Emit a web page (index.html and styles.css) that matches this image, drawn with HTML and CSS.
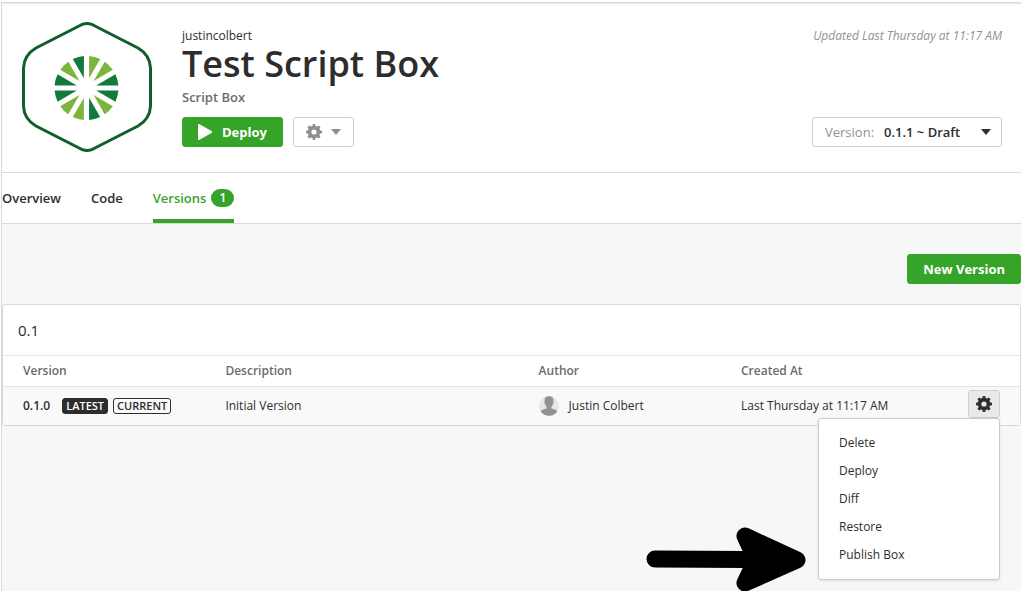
FILE: index.html
```html
<!DOCTYPE html>
<html lang="en">
<head>
<meta charset="utf-8">
<title>Test Script Box</title>
<link rel="stylesheet" href="styles.css">
</head>
<body>
<svg class="defs" aria-hidden="true">
  <symbol id="gear" viewBox="0 0 16 16">
    <circle cx="8" cy="8" r="4.4" fill="none" stroke="currentColor" stroke-width="3.6"/>
    <g fill="currentColor">
      <path id="tooth" d="M6.2 3 6.8 0H9.2L9.8 3Z"/>
      <use href="#tooth" transform="rotate(45 8 8)"/>
      <use href="#tooth" transform="rotate(90 8 8)"/>
      <use href="#tooth" transform="rotate(135 8 8)"/>
      <use href="#tooth" transform="rotate(180 8 8)"/>
      <use href="#tooth" transform="rotate(225 8 8)"/>
      <use href="#tooth" transform="rotate(270 8 8)"/>
      <use href="#tooth" transform="rotate(315 8 8)"/>
    </g>
  </symbol>
</svg>
<div class="page">
  <header class="box-header">
    <svg class="logo" viewBox="0 0 130 130" aria-hidden="true">
      <path d="M57 4Q65 -1 73 4L116 26Q128 33 128.500 46V84Q128 97 116 104L73 126Q65 131 57 126L14 104Q2 97 1.500 84V46Q2 33 14 26Z" fill="#fff" stroke="#0f5f2c" stroke-width="3"/>
      <g transform="translate(64.500 66)">
        <g fill="#7cb43c">
          <path id="wedge" d="M2.600-9.700V-31.900A32 32 0 0 1 13.700-28.900Z"/>
          <use href="#wedge" transform="rotate(30)"/>
          <use href="#wedge" transform="rotate(120)"/>
          <use href="#wedge" transform="rotate(180)"/>
          <use href="#wedge" transform="rotate(210)"/>
          <use href="#wedge" transform="rotate(300)"/>
        </g>
        <g fill="#137a3e">
          <path id="wedge-dark" transform="rotate(60)" d="M2.600-9.700V-31.900A32 32 0 0 1 13.700-28.900Z"/>
          <use href="#wedge-dark" transform="rotate(30)"/>
          <use href="#wedge-dark" transform="rotate(90)"/>
          <use href="#wedge-dark" transform="rotate(180)"/>
          <use href="#wedge-dark" transform="rotate(210)"/>
          <use href="#wedge-dark" transform="rotate(270)"/>
        </g>
      </g>
    </svg>
    <div class="summary">
      <div class="owner">justincolbert</div>
      <h1 class="title">Test Script Box</h1>
      <div class="kind">Script Box</div>
      <div class="buttons">
        <button class="btn btn-primary btn-deploy" type="button">
          <svg class="play" viewBox="0 0 14 16" aria-hidden="true"><path d="M0 1Q0-.5 1.500.3L13.500 7Q14.500 8 13.500 9L1.500 15.700Q0 16.500 0 15Z" fill="currentColor"/></svg>
          Deploy
        </button>
        <button class="btn btn-settings" type="button" aria-label="Settings">
          <svg class="gear"><use href="#gear"/></svg>
          <svg class="caret" viewBox="0 0 10 6" aria-hidden="true"><path d="M0 0H10L5 6Z" fill="currentColor"/></svg>
        </button>
      </div>
    </div>
    <div class="meta">
      <div class="updated">Updated Last Thursday at 11:17 AM</div>
      <div class="version-picker">
        <label class="picker-label" for="version">Version:</label>
        <select class="picker-select" id="version"><option>0.1.1 ~ Draft</option></select>
        <svg class="caret" viewBox="0 0 10 6" aria-hidden="true"><path d="M0 0H10L5 6Z" fill="currentColor"/></svg>
      </div>
    </div>
  </header>
  <nav class="tabs">
    <a class="tab" href="#overview">Overview</a>
    <a class="tab" href="#code">Code</a>
    <a class="tab tab-active" href="#versions">Versions <span class="count">1</span></a>
  </nav>
  <main class="content">
    <div class="toolbar"><button class="btn btn-primary" type="button">New Version</button></div>
    <section class="card">
      <h2 class="card-title">0.1</h2>
      <table class="versions">
        <thead>
          <tr><th class="col-version">Version</th><th class="col-description">Description</th><th class="col-author">Author</th><th>Created At</th><th class="col-actions"></th></tr>
        </thead>
        <tbody>
          <tr>
            <td><div class="cell"><span class="number">0.1.0</span><span class="tag tag-dark">LATEST</span><span class="tag">CURRENT</span></div></td>
            <td>Initial Version</td>
            <td>
              <div class="cell">
                <svg class="avatar" viewBox="0 0 20 20" aria-hidden="true">
                  <clipPath id="round"><circle cx="10" cy="10" r="10"/></clipPath>
                  <g clip-path="url(#round)"><path d="M0 0H20V20H0Z" fill="#e6e6e6"/><path d="M5.500 5Q5.500 0 10 0T14.500 5Q15 8 12.500 10.500V12.500Q17 13.500 19 15.500V20H1V15.500Q3 13.500 7.500 12.500V10.500Q5 8 5.500 5Z" fill="#929292"/></g>
                </svg>
                <span>Justin Colbert</span>
              </div>
            </td>
            <td>Last Thursday at 11:17 AM</td>
            <td class="actions">
              <div class="dropdown">
                <button class="btn-row" type="button" aria-label="Version actions" aria-expanded="true"><svg class="gear"><use href="#gear"/></svg></button>
                <ul class="menu">
                  <li><button class="menu-item" type="button">Delete</button></li>
                  <li><button class="menu-item" type="button">Deploy</button></li>
                  <li><button class="menu-item" type="button">Diff</button></li>
                  <li><button class="menu-item" type="button">Restore</button></li>
                  <li><button class="menu-item" type="button">Publish Box</button></li>
                </ul>
                <svg class="pointer" viewBox="0 0 160 64" aria-hidden="true"><path d="M9 32 100 32.500M99 9 151 33 99 56 110 33Z" fill="#000" stroke="#000" stroke-width="17" stroke-linecap="round" stroke-linejoin="round"/></svg>
              </div>
            </td>
          </tr>
        </tbody>
      </table>
    </section>
  </main>
</div>
</body>
</html>
```
FILE: styles.css
```css
* { box-sizing: border-box; }
body {
  margin: 0;
  padding: 2px 0 0 1px;
  background: #fff;
  color: #2d2d2d;
  font: 12px/20px "Open Sans", "Noto Sans", sans-serif;
}
button, select { font: inherit; color: inherit; }
.defs { position: absolute; width: 0; height: 0; }
.page {
  display: flex;
  flex-direction: column;
  min-height: calc(100vh - 2px);
  border-top: 1px solid #d9d9d9;
  border-left: 1px solid #d9d9d9;
  background: #f7f7f7;
}
.box-header {
  display: flex;
  padding: 19px 19px 20px 20px;
  border-bottom: 1px solid #d9d9d9;
  background: #fff;
  box-shadow: inset 0 2px 2px -1px #e6e6e6;
}
.logo { width: 130px; height: 130px; }
.summary { flex: 1; padding: 4px 0 0 30px; }
.owner { line-height: 19px; }
.title { margin: 0; font-size: 36px; line-height: 38px; font-weight: 600; }
.kind { padding-top: 4px; color: #6b6b6b; font-size: 13px; font-weight: 600; }
.buttons { display: flex; gap: 10px; margin-top: 10px; }
.btn {
  display: flex;
  align-items: center;
  height: 30px;
  padding: 0 15px;
  border: 1px solid #cfcfcf;
  border-radius: 3px;
  background: #fff;
}
.btn-primary { border-color: #36a329; background: #36a329; color: #fff; font-size: 13px; font-weight: 700; }
.btn-deploy { gap: 10px; }
.btn-settings { gap: 9px; padding: 0 12px; color: #8f8f8f; }
.play { width: 14px; height: 16px; }
.gear { width: 16px; height: 16px; }
.caret { width: 10px; height: 6px; }
.meta { display: flex; flex-direction: column; align-items: flex-end; justify-content: space-between; padding: 4px 0 5px; }
.updated { color: #929292; font-style: italic; }
.version-picker {
  display: flex;
  align-items: center;
  position: relative;
  width: 190px;
  height: 30px;
  border: 1px solid #cfcfcf;
  border-radius: 3px;
  font-size: 13px;
}
.picker-label { padding-left: 12px; color: #929292; }
.picker-select {
  flex: 1;
  min-width: 0;
  height: 28px;
  padding: 0 0 0 10px;
  border: 0;
  background: transparent;
  font-weight: 600;
  appearance: none;
}
.version-picker .caret { position: absolute; right: 10px; pointer-events: none; }
.tabs { display: flex; gap: 30px; height: 51px; border-bottom: 1px solid #d9d9d9; background: #fff; }
.tab { display: flex; align-items: center; gap: 5px; padding-top: 4px; border-bottom: 4px solid transparent; color: inherit; font-size: 13px; font-weight: 600; text-decoration: none; }
.tab-active { border-color: #36a329; color: #36a329; }
.count { padding: 0 8px; border-radius: 9px; background: #36a329; color: #fff; font-size: 12px; line-height: 18px; }
.content { padding-top: 30px; }
.toolbar { display: flex; justify-content: flex-end; margin-bottom: 20px; }
.card { border: 1px solid #d9d9d9; border-radius: 3px; background: #fff; }
.card-title { margin: 0; padding: 15px; font-size: 15px; line-height: 20px; font-weight: 500; }
.versions { width: 100%; border-collapse: collapse; table-layout: fixed; }
.versions th, .versions td { padding: 0 0 0 20px; border-top: 1px solid #e4e4e4; text-align: left; }
.versions th { height: 31px; color: #6b6b6b; font-weight: 600; }
.versions td { height: 38px; background: #f9f9f9; }
.col-version, .col-author { width: 19.9%; }
.col-description { width: 30.8%; }
.col-actions { width: 52px; }
.cell { display: flex; align-items: center; }
.number { margin-right: 12px; font-weight: 600; }
.tag { margin-right: 5px; padding: 0 3px; border: 1px solid #2d2d2d; border-radius: 3px; font-size: 11px; line-height: 14px; font-weight: 600; }
.tag-dark { background: #2d2d2d; color: #fff; }
.avatar { width: 20px; height: 20px; margin-right: 10px; }
.versions .actions { padding: 0; }
.dropdown { position: relative; width: 32px; margin-bottom: 3px; }
.btn-row { display: flex; align-items: center; justify-content: center; width: 32px; height: 28px; padding: 0; border: 1px solid #cfcfcf; border-radius: 3px; background: #e9e9e9; }
.menu {
  position: absolute;
  top: 28px;
  right: 0;
  width: 182px;
  margin: 0;
  padding: 10px 0;
  border: 1px solid #cbcbcb;
  border-radius: 3px;
  background: #fff;
  box-shadow: 0 1px 3px rgba(0, 0, 0, 0.1);
  list-style: none;
}
.menu-item { display: block; width: 100%; height: 28px; padding: 0 20px; border: 0; background: none; text-align: left; }
.pointer { position: absolute; top: 137px; right: 194px; width: 160px; height: 64px; }
```
